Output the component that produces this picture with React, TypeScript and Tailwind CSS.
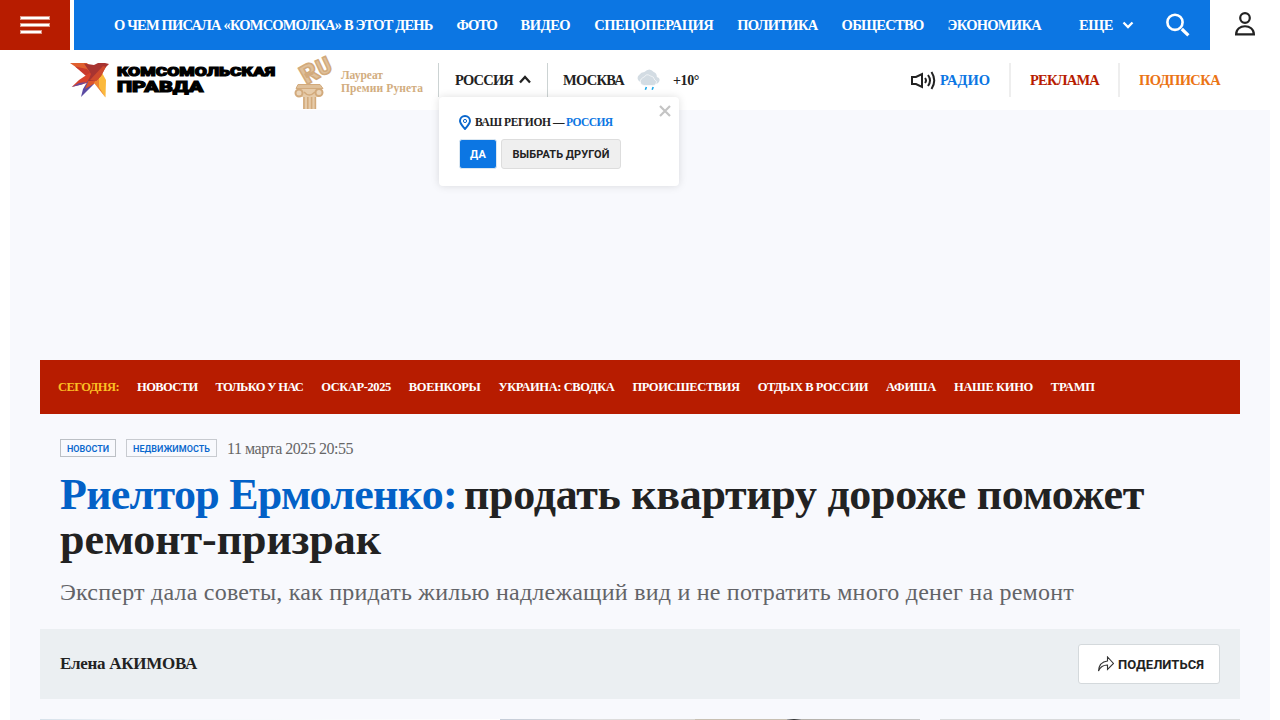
import { useLayoutEffect, useRef, useState } from "react";

type FitProps = { text: string; width: number; className?: string };

/* One line of text whose tracking is adjusted so that it spans `width` pixels. */
function Fit({ text, width, className = "" }: FitProps) {
  const ref = useRef<HTMLSpanElement>(null);
  const [tracking, setTracking] = useState(0);
  useLayoutEffect(() => {
    if (!ref.current) return;
    const natural = ref.current.getBoundingClientRect().width;
    setTracking((width - natural) / text.length);
  }, [text, width]);
  return (
    <span ref={ref} className={`inline-block shrink-0 whitespace-nowrap ${className}`} style={{ letterSpacing: `${tracking}px` }}>
      {text}
    </span>
  );
}

const topNav: [string, number][] = [
  ["О ЧЕМ ПИСАЛА «КОМСОМОЛКА» В ЭТОТ ДЕНЬ", 318.6],
  ["ФОТО", 40],
  ["ВИДЕО", 49.6],
  ["СПЕЦОПЕРАЦИЯ", 119],
  ["ПОЛИТИКА", 80.4],
  ["ОБЩЕСТВО", 82],
  ["ЭКОНОМИКА", 93.4],
];

const today: [string, number][] = [
  ["НОВОСТИ", 60.6],
  ["ТОЛЬКО У НАС", 87.6],
  ["ОСКАР-2025", 69.6],
  ["ВОЕНКОРЫ", 71.6],
  ["УКРАИНА: СВОДКА", 116],
  ["ПРОИСШЕСТВИЯ", 107.2],
  ["ОТДЫХ В РОССИИ", 110.4],
  ["АФИША", 50],
  ["НАШЕ КИНО", 78.8],
  ["ТРАМП", 44],
];

function Bird() {
  return (
    <svg className="h-[36px] w-[40px]" viewBox="0 0 40 36">
      <path d="M0 1H17L24 9L18 14L10 8Z" fill="#e0602f" />
      <path d="M5 4.500L17 7L22 13L16 14Z" fill="#c93a2c" />
      <path d="M21 10L9 18L1.700 25L17 21L25 16Z" fill="#d8432c" />
      <path d="M9 21L1.700 25L12 22.500L17 20Z" fill="#6a4a9c" />
      <path d="M19 17L13 27L11 35L24 22Z" fill="#5b4ba3" />
      <path d="M20 15L15 27L27 20L30 12Z" fill="#dd552b" />
      <path d="M31 9L36 18L35.500 35.500L26 22L28 14Z" fill="#fbb93c" />
      <path d="M29 13L29 25L35.500 35.500L24 21Z" fill="#ee8430" />
      <path d="M14 1.500L24 3L28 1H35L39 2L35 6L31 14L26 19L18 19L21 12Z" fill="#a83431" />
      <path d="M33 4L36 5L31 14L26 19L20 18Z" fill="#cf4a2d" />
    </svg>
  );
}

function Award() {
  return (
    <svg className="h-[56px] w-[42px] overflow-visible" viewBox="0 0 42 56">
      <g fontFamily="Roboto" fontWeight="900" fill="#dfc09a" stroke="#d2aa7c" strokeWidth="1.6">
        <text transform="translate(11.500 31) rotate(-30)" fontSize="26">R</text>
        <text transform="translate(26 22.500) rotate(-25) scale(.9 1)" fontSize="23">U</text>
      </g>
      <path d="M3 30.500H25L28 34.500H1Z" fill="#dfc09a" stroke="#d2aa7c" />
      <path d="M5 35H24V43H5Z" fill="#e6cba9" />
      <circle cx="4" cy="39" r="3.500" fill="#ead4b8" stroke="#d2aa7c" strokeWidth="2" />
      <circle cx="24" cy="38.500" r="3.500" fill="#ead4b8" stroke="#d2aa7c" strokeWidth="2" />
      <path d="M9 38Q14 44 20 38" fill="none" stroke="#d2aa7c" strokeWidth="1.500" />
      <path d="M8 43H21V55H8Z" fill="#e6cba9" />
      <path d="M9 43V55M12.800 43V55M16.600 43V55M20.400 43V55" stroke="#d2aa7c" strokeWidth="1.600" />
    </svg>
  );
}

export default function App() {
  return (
    <div className="h-[720px] w-[1280px] overflow-hidden bg-white font-['Liberation_Serif',serif] text-[#222]">
      <header className="flex h-[50px]">
        <button className="flex w-[70px] flex-col items-start justify-center gap-[3px] bg-[#b71c00] pl-5">
          <i className="h-1 w-[30px] border border-[#dd9687] bg-white" />
          <i className="h-1 w-[30px] border border-[#dd9687] bg-white" />
          <i className="h-1 w-[22px] border border-[#dd9687] bg-white" />
        </button>
        <nav className="ml-1 flex w-[1136px] items-center gap-6 bg-[#0c76e3] pl-10 text-[14.5px] leading-[22px] font-bold text-white">
          {topNav.map(([t, w]) => <Fit key={t} text={t} width={w} />)}
          <span className="ml-[14px] flex items-center gap-[9px]">
            <Fit text="ЕЩЕ" width={34} />
            <svg className="h-[8px] w-[12px]" viewBox="0 0 12 8"><path d="M1.500 1.500L6 6L10.500 1.500" fill="none" stroke="white" strokeWidth="2.300" /></svg>
          </span>
          <svg className="ml-[8px] h-6 w-6" viewBox="0 0 24 24" fill="none" stroke="white"><circle cx="9" cy="9.300" r="7.600" strokeWidth="2.600" /><path d="M15.800 16L22.400 22.400" strokeWidth="3.200" /></svg>
        </nav>
        <div className="flex grow items-center justify-center pb-[3px]">
          <svg className="h-[24px] w-[22px]" viewBox="0 0 22 24" fill="none" stroke="#222" strokeWidth="2.200"><circle cx="11" cy="6" r="4.800" /><path d="M2.100 22.400C2.100 11.500 19.900 11.500 19.900 22.400Z" /></svg>
        </div>
      </header>

      <div className="flex h-[60px] text-[14.5px] leading-[22px] font-bold">
        <div className="mt-[12px] ml-[70px] flex h-[36px] w-[206px] gap-[6px]">
          <Bird />
          <svg className="h-[36px] w-[160px]" viewBox="0 0 160 36" fontFamily="Roboto" fontWeight="900" stroke="black" strokeWidth="1.1">
            <text x="1" y="14.300" fontSize="13.500" textLength="158" lengthAdjust="spacingAndGlyphs">КОМСОМОЛЬСКАЯ</text>
            <text x="1" y="30" fontSize="15.500" textLength="86.500" lengthAdjust="spacingAndGlyphs">ПРАВДА</text>
          </svg>
        </div>
        <div className="mt-1 ml-[19px] flex h-[56px] w-[143px] gap-[4px]">
          <Award />
          <div className="flex flex-col pt-[15px] text-[11.5px] leading-[13px] text-[#d2ad80]">
            <Fit text="Лауреат" width={42} className="self-start" />
            <Fit text="Премии Рунета" width={82} className="self-start" />
          </div>
        </div>
        <div className="relative mt-[13px] flex h-[34px] w-[110px] items-center gap-[6px] border-x border-[#ccd3d3] pl-4">
          <Fit text="РОССИЯ" width={58} />
          <svg className="mb-[2px] h-[9px] w-[12px]" viewBox="0 0 12 9"><path d="M1 7.500L6 2L11 7.500" fill="none" stroke="#222" strokeWidth="2.300" /></svg>
          <div className="absolute top-[34px] left-0 z-10 h-[89px] w-[240px] rounded bg-white pt-[17px] pl-5 shadow-[0_0_8px_rgba(0,0,0,0.13)]">
            <svg className="absolute top-[8px] right-[8px] h-[12px] w-[12px]" viewBox="0 0 12 12"><path d="M1 1L11 11M11 1L1 11" stroke="#c4c4c4" strokeWidth="2.200" /></svg>
            <div className="flex h-4 items-center text-[11.5px] leading-4">
              <svg className="mr-1 h-[15px] w-3" viewBox="0 0 12 15" fill="none" stroke="#0a67cd"><path d="M6 14C4 11.500 1 8.500 1 6A5 5 0 0 1 11 6C11 8.500 8 11.500 6 14Z" strokeWidth="2" /><circle cx="6" cy="6" r="1.600" /></svg>
              <Fit text="ВАШ РЕГИОН —" width={89} />
              <Fit text="РОССИЯ" width={46.500} className="ml-[2px] text-[#0c76e3]" />
            </div>
            <div className="mt-[9px] flex gap-[4px] font-['Roboto',sans-serif] text-[11px]">
              <button className="flex h-[30px] w-[38px] items-center justify-center rounded-[3px] border border-[#dbe7f1] bg-[#0c76e3] text-white"><Fit text="ДА" width={16} className="pt-px" /></button>
              <button className="flex h-[30px] w-[120px] items-center justify-center rounded-[3px] border border-[#ddd] bg-[#efefef]"><Fit text="ВЫБРАТЬ ДРУГОЙ" width={97} className="pt-px" /></button>
            </div>
          </div>
        </div>
        <div className="flex items-center pl-[15px]">
          <Fit text="МОСКВА" width={61} />
          <svg className="ml-[13px] h-[22px] w-[23px]" viewBox="0 0 22 22" preserveAspectRatio="none">
            <path d="M4 13A4 4 0 0 1 2 6Q4 3 7 3Q12 -2 16 3Q19 4 19 8Q23 9 21 13Q20 15 17 15H6Z" fill="#d3dce3" />
            <path d="M7 16.500A4 4 0 0 1 4 10Q6 8 7 8Q9 4 13 7Q16 7 17 11Q20 12 18 15Q17 16.500 15 16.500Z" fill="#d3dce3" stroke="white" strokeWidth="0.600" />
            <path d="M9 18L8 20.700M15.500 18L14.500 20.700" stroke="#1aa6e8" strokeWidth="1.500" />
          </svg>
          <Fit text="+10°" width={26} className="ml-[13px] pt-[2px] text-[14px]" />
        </div>
        <div className="mr-[60px] ml-auto flex items-center">
          <svg className="h-[20px] w-[26px]" viewBox="0 0 26 20" fill="none" stroke="#222" strokeWidth="2"><path d="M1 7H5L11 4V17L5 14H1Z" /><path d="M14 8Q16 10.500 14 13M17 5Q21 10.500 17 16M20.500 2Q26 10.500 20.500 19" /></svg>
          <Fit text="РАДИО" width={50} className="ml-[3px] text-[#0c76e3]" />
          <i className="mr-[19px] ml-[19px] h-[34px] w-[2px] bg-[#eee]" />
          <Fit text="РЕКЛАМА" width={69} className="text-[#b71c00]" />
          <i className="mr-[19px] ml-[19px] h-[34px] w-[2px] bg-[#eee]" />
          <Fit text="ПОДПИСКА" width={81} className="text-[#eb7415]" />
        </div>
      </div>

      <main className="mx-[10px] h-[610px] bg-[#f8f9fd] px-[30px] pt-[250px]">
        <nav className="flex h-[54px] items-center gap-[18px] bg-[#b71c00] pl-[18px] text-[12.5px] font-bold text-white">
          <Fit text="СЕГОДНЯ:" width={61} className="text-[#fbbf24]" />
          {today.map(([t, w]) => <Fit key={t} text={t} width={w} />)}
        </nav>
        <div className="mt-[25px] flex h-[19px] items-start pl-5">
          <span className="flex h-[18px] w-[56px] items-center justify-center border border-[#bcc0c5] font-['Roboto',sans-serif] text-[9px] leading-[16px] font-semibold text-[#0867cd]"><Fit text="НОВОСТИ" width={42} className="pt-[2px]" /></span>
          <span className="ml-[10px] flex h-[18px] w-[91px] items-center justify-center border border-[#c8cbd0] font-['Roboto',sans-serif] text-[9px] leading-[16px] font-semibold text-[#0867cd]"><Fit text="НЕДВИЖИМОСТЬ" width={77} className="pt-[2px]" /></span>
          <Fit text="11 марта 2025 20:55" width={126} className="ml-[10px] text-[16px] leading-[19px] text-[#666]" />
        </div>
        <h1 className="mt-[14px] ml-5 text-[44px] leading-[45px] font-bold">
          <span className="flex gap-[7px]"><Fit text="Риелтор Ермоленко:" width={397} className="text-[#0361c7]" /><Fit text="продать квартиру дороже поможет" width={680} /></span>
          <Fit text="ремонт-призрак" width={321} />
        </h1>
        <p className="mt-[14px] ml-5 h-[33px] text-[24px] leading-[32px] text-[#636468]"><Fit text="Эксперт дала советы, как придать жилью надлежащий вид и не потратить много денег на ремонт" width={1014} /></p>
        <div className="mt-5 flex h-[70px] items-center justify-between bg-[#ebeff2] px-5">
          <Fit text="Елена АКИМОВА" width={137} className="text-[17px] font-bold" />
          <button className="flex h-[40px] w-[142px] items-center rounded-[3px] border border-[#d4d9dc] bg-white pl-[18px] font-['Roboto',sans-serif] text-[13px] font-bold">
            <svg className="mr-[4px] h-4 w-[17px]" viewBox="0 0 17 16" fill="none" stroke="#333" strokeWidth="1.100"><path d="M1.500 15Q2 6 10.500 5V1L16.500 7.500L10.500 13.500V9Q4 9 1.500 15Z" /></svg>
            <Fit text="ПОДЕЛИТЬСЯ" width={86} className="pt-px" />
          </button>
        </div>
        <div className="mt-5 flex h-px">
          <i className="w-[460px] bg-linear-to-r from-[#d6e1ea] via-[#f1f6fa] via-20% to-white" />
          <i className="w-[195px] bg-linear-to-r from-[#c4ccd8] via-[#dedede] to-[#d8d5d0]" />
          <i className="w-[92px] bg-[#c8c0b2]" />
          <i className="w-[14px] bg-linear-to-r from-[#aaa] via-[#333] to-[#aaa]" />
          <i className="w-[119px] bg-linear-to-r from-[#b5b1aa] to-[#c5c5c5]" />
          <i className="ml-5 w-[300px] bg-[#d9dadb]" />
        </div>
      </main>
    </div>
  );
}
